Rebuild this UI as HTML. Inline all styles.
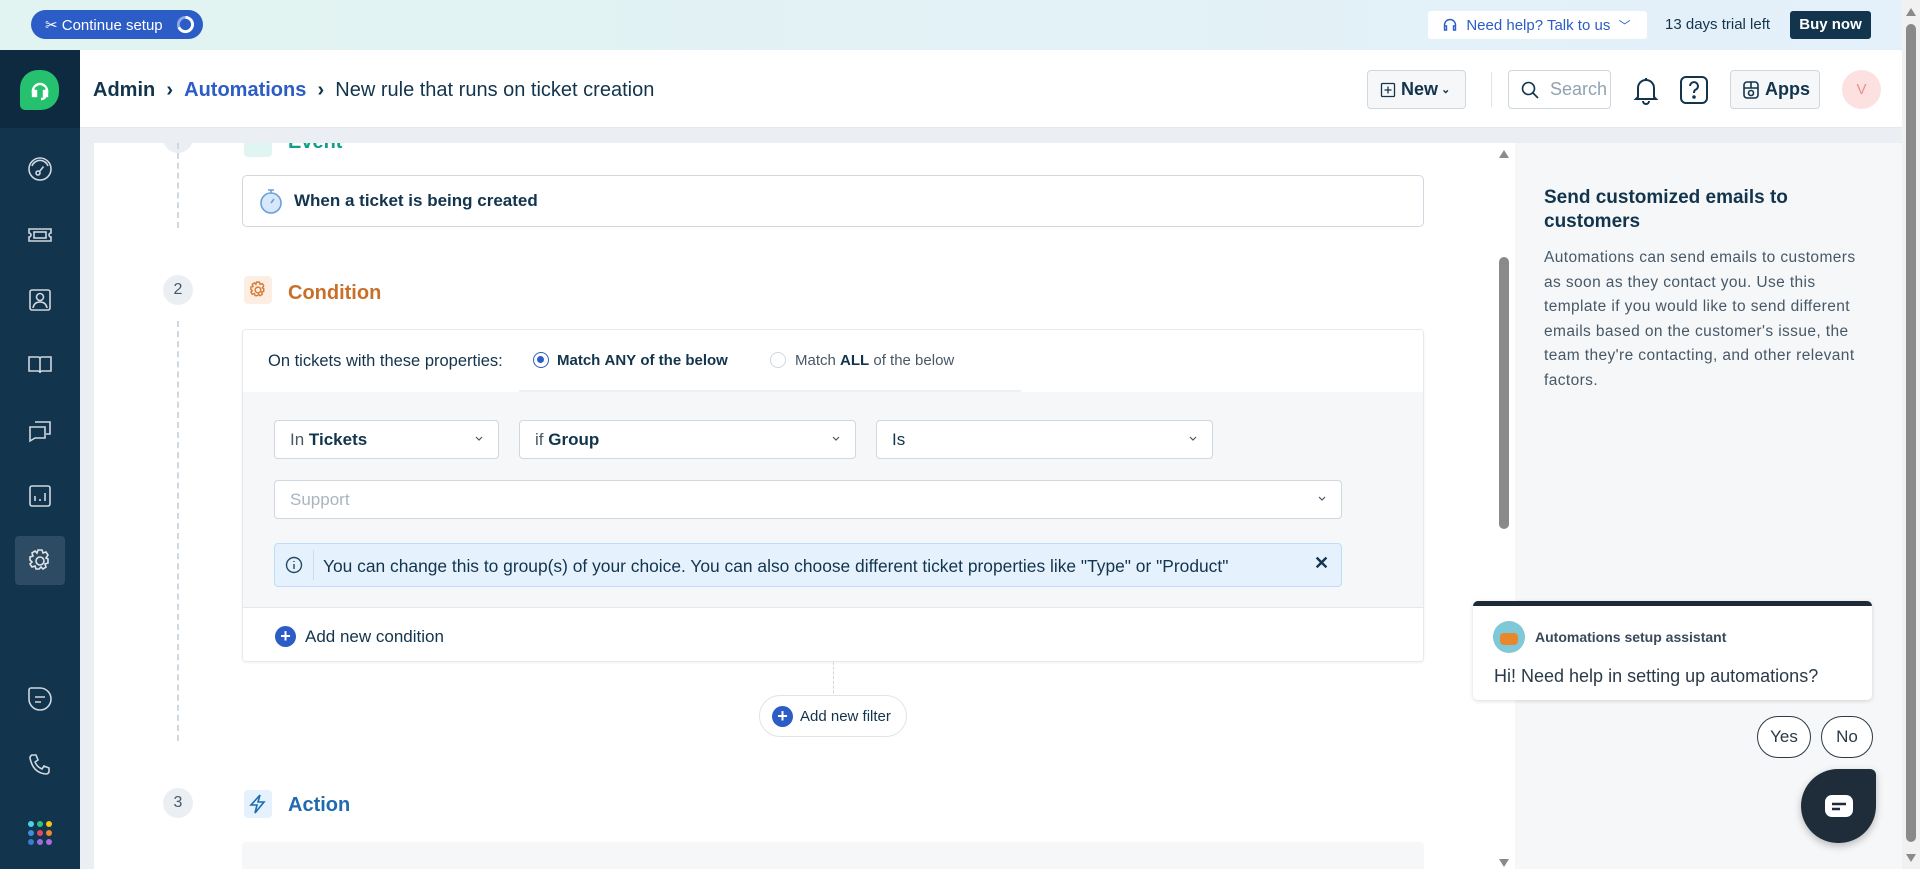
<!DOCTYPE html>
<html><head><meta charset="utf-8"><style>
*{box-sizing:border-box;margin:0;padding:0}
body{width:1920px;height:869px;overflow:hidden;position:relative;font-family:"Liberation Sans",sans-serif;color:#12344d;background:#ebeff3}
.a{position:absolute}
.top{left:0;top:0;width:1902px;height:50px;background:linear-gradient(90deg,#e1f4f1,#e4f0fa)}
.side{left:0;top:50px;width:80px;height:819px;background:#12344d}
.ic{position:absolute;left:26px;width:28px;height:28px}
.hdr{left:80px;top:50px;width:1822px;height:78px;background:#fff;border-bottom:1px solid #e3e8ec}
.btn{position:absolute;border:1px solid #cfd7df;border-radius:4px;background:#f5f7f9;display:flex;align-items:center;font-size:18px;font-weight:600}
.dd{position:absolute;background:#fff;border:1px solid #cfd7df;border-radius:4px;height:39px;font-size:17px;display:flex;align-items:center;padding-left:15px;color:#12344d}
.dd .cv{position:absolute;right:14px;top:12px}
.vd{border-left:2px dashed #cfd7df;position:absolute;width:0}
.num{position:absolute;width:30px;height:30px;border-radius:50%;background:#ebeff3;font-size:16px;text-align:center;line-height:30px;color:#475867}
</style></head><body>
<div class="a top"></div>
<div class="a" style="left:31px;top:10px;width:172px;height:29px;border-radius:15px;background:#2c5cc5;color:#fff;font-size:15px;display:flex;align-items:center;padding-left:14px">✂&nbsp;Continue setup
<svg class="a" style="right:8px;top:5px" width="19" height="19" viewBox="0 0 20 20"><circle cx="10" cy="10" r="7.5" fill="none" stroke="#8fa9e8" stroke-width="3"/><path d="M10 2.5A7.5 7.5 0 1 1 3 13" fill="none" stroke="#fff" stroke-width="3"/></svg></div>
<div class="a" style="left:1428px;top:11px;width:219px;height:28px;background:#fff;border-radius:3px;color:#2c5cc5;font-size:15px;display:flex;align-items:center;padding-left:14px">
<svg width="16" height="16" viewBox="0 0 16 16" fill="none" stroke="#2c5cc5" stroke-width="1.4"><path d="M2.5 10V8a5.5 5.5 0 0 1 11 0v2M2.5 9h2v4h-2zM11.5 9h2v4h-2z"/></svg>&nbsp;&nbsp;Need help? Talk to us&nbsp;&nbsp;<span style="font-size:12px">﹀</span></div>
<div class="a" style="left:1665px;top:16px;font-size:15px;color:#12344d">13 days trial left</div>
<div class="a" style="left:1790px;top:11px;width:81px;height:28px;background:#12344d;border-radius:3px;color:#fff;font-size:15px;font-weight:700;text-align:center;line-height:28px">Buy now</div>

<div class="a side"></div>
<div class="a" style="left:0;top:50px;width:80px;height:78px;background:#0e2a40"></div>
<div class="a" style="left:20px;top:70px;width:39px;height:40px;background:#25c16f;border-radius:18px 18px 18px 5px"></div>
<svg class="a" style="left:29px;top:80px" width="22" height="22" viewBox="0 0 22 22" fill="none" stroke="#fff" stroke-width="2.4"><path d="M4 13V11a7 7 0 0 1 14 0v2"/><rect x="4" y="11" width="3" height="5" fill="#fff"/><rect x="15" y="11" width="3" height="5" fill="#fff"/><path d="M16 16q0 3-4 3"/></svg>
<div class="a" style="left:15px;top:536px;width:50px;height:49px;background:#2d4b63;border-radius:4px"></div>
<svg class="ic" style="top:155px" viewBox="0 0 28 28" fill="none" stroke="#cfd7df" stroke-width="1.6"><circle cx="14" cy="14" r="11"/><path d="M6 11a8.5 8.5 0 0 1 16 0"/><circle cx="12" cy="18" r="2"/><path d="M13.5 16.5l4-5"/></svg>
<svg class="ic" style="top:221px" viewBox="0 0 28 28" fill="none" stroke="#cfd7df" stroke-width="1.6"><path d="M3 8h22v4a2 2 0 0 0 0 4v4H3v-4a2 2 0 0 0 0-4z"/><rect x="8" y="11" width="12" height="6"/></svg>
<svg class="ic" style="top:286px" viewBox="0 0 28 28" fill="none" stroke="#cfd7df" stroke-width="1.6"><rect x="4" y="4" width="20" height="20" rx="2"/><circle cx="14" cy="11" r="3.5"/><path d="M7 22q1-6 7-6t7 6"/></svg>
<svg class="ic" style="top:351px" viewBox="0 0 28 28" fill="none" stroke="#cfd7df" stroke-width="1.6"><path d="M3 6h9q2 0 2 2v14q0-2-2-2H3zM25 6h-9q-2 0-2 2v14q0-2 2-2h9z"/></svg>
<svg class="ic" style="top:416px" viewBox="0 0 28 28" fill="none" stroke="#cfd7df" stroke-width="1.6"><path d="M9 6h15v12h-4M4 11h15v11H9l-5 3z"/></svg>
<svg class="ic" style="top:482px" viewBox="0 0 28 28" fill="none" stroke="#cfd7df" stroke-width="1.6"><rect x="4" y="4" width="20" height="20" rx="2"/><path d="M9 19v-5M14 19v-2M19 19v-8"/></svg>
<svg class="ic" style="top:547px" viewBox="0 0 28 28" fill="none" stroke="#dfe5ea" stroke-width="1.6"><circle cx="14" cy="14" r="4"/><path d="M12 3h4l1 3 3-1 2 3-2 3 2 1v4l-3 1 1 3-3 2-2-2-2 2h-3l-1-3-3 1-2-3 2-2-2-2v-3l3-1-1-3 3-2 2 2z"/></svg>
<svg class="ic" style="top:685px" viewBox="0 0 28 28" fill="none" stroke="#cfd7df" stroke-width="1.6"><path d="M14 3a11 11 0 1 1-11 11V5a2 2 0 0 1 2-2z"/><path d="M9 12h10M9 17h6"/></svg>
<svg class="ic" style="top:751px" viewBox="0 0 28 28" fill="none" stroke="#cfd7df" stroke-width="1.6"><path d="M6 4l4 0 2 5-3 2q2 5 7 7l2-3 5 2v4q-1 2-3 2Q7 22 4 7q0-2 2-3z"/></svg>
<svg class="a" style="left:26px;top:820px" width="28" height="26" viewBox="0 0 28 26"><g><circle cx="5" cy="4" r="3" fill="#4fd1e6"/><circle cx="14" cy="4" r="3" fill="#2ec27e"/><circle cx="23" cy="4" r="3" fill="#f5c518"/><circle cx="5" cy="13" r="3" fill="#3d8fe0"/><circle cx="14" cy="13" r="3" fill="#e5486a"/><circle cx="23" cy="13" r="3" fill="#f08a30"/><circle cx="5" cy="22" r="3" fill="#3a7bd5"/><circle cx="14" cy="22" r="3" fill="#9b6ee0"/><circle cx="23" cy="22" r="3" fill="#b469d9"/></g></svg>

<div class="a hdr"></div>
<div class="a" style="left:93px;top:79px;font-size:20px;color:#12344d;white-space:nowrap"><b style="font-weight:600">Admin</b>&nbsp;&nbsp;<b>›</b>&nbsp;&nbsp;<span style="color:#2c5cc5;font-weight:600">Automations</span>&nbsp;&nbsp;<b>›</b>&nbsp;&nbsp;New rule that runs on ticket creation</div>
<div class="btn" style="left:1367px;top:70px;width:99px;height:39px;padding-left:12px"><svg width="16" height="16" viewBox="0 0 16 16" fill="none" stroke="#12344d" stroke-width="1.3"><rect x="1.5" y="1.5" width="13" height="13" rx="1"/><path d="M8 4.5v7M4.5 8h7"/></svg>&nbsp;New <span style="font-size:11px">&nbsp;⌄</span></div>
<div class="a" style="left:1491px;top:72px;width:1px;height:35px;background:#dfe4e8"></div>
<div class="btn" style="left:1508px;top:70px;width:103px;height:39px;background:#fff;font-weight:400;color:#92a2b1;padding-left:11px"><svg width="20" height="20" viewBox="0 0 20 20" fill="none" stroke="#12344d" stroke-width="1.6"><circle cx="8.5" cy="8.5" r="6"/><path d="M13 13l5 5"/></svg>&nbsp;&nbsp;Search</div>
<svg class="a" style="left:1633px;top:75px" width="26" height="30" viewBox="0 0 26 30" fill="none" stroke="#12344d" stroke-width="2"><path d="M5 22V13a8 8 0 0 1 16 0v9l2 2H3zM10 26a3 3 0 0 0 6 0M13 3v2"/></svg>
<svg class="a" style="left:1679px;top:75px" width="30" height="30" viewBox="0 0 30 30" fill="none" stroke="#12344d" stroke-width="2"><rect x="2" y="2" width="26" height="26" rx="5"/><path d="M11 11a4 4 0 1 1 5 4q-1 1-1 3"/><circle cx="15" cy="22" r="0.8" fill="#12344d"/></svg>
<div class="btn" style="left:1730px;top:70px;width:90px;height:39px;padding-left:11px"><svg width="18" height="20" viewBox="0 0 18 20" fill="none" stroke="#12344d" stroke-width="1.6"><rect x="2" y="2" width="14" height="16" rx="3"/><path d="M2 8h14M9 2v6"/><circle cx="9" cy="13" r="2.5"/></svg>&nbsp;Apps</div>
<div class="a" style="left:1842px;top:70px;width:39px;height:39px;border-radius:50%;background:#fde0e0;color:#e89090;font-size:15px;text-align:center;line-height:39px">V</div>

<div class="a" style="left:94px;top:143px;width:1421px;height:726px;background:#fff;overflow:hidden">
 <div class="num" style="left:69px;top:-20px"></div>
 <div class="a" style="left:150px;top:-14px;width:28px;height:28px;background:#e0f5f1;border-radius:4px"></div>
 <div class="a" style="left:194px;top:-12px;font-size:20px;font-weight:600;color:#12a08a">Event</div>
 <div class="vd" style="left:83px;top:0;height:85px"></div>
 <div class="a" style="left:148px;top:32px;width:1182px;height:52px;border:1px solid #cfd7df;border-radius:5px"></div>
 <svg class="a" style="left:164px;top:44px" width="26" height="28" viewBox="0 0 26 28"><circle cx="13" cy="16" r="10" fill="#d6e8fa" stroke="#6c9ed9" stroke-width="1.6"/><path d="M10 3h6M13 3v3M13 16l3-4" stroke="#6c9ed9" stroke-width="1.6" fill="none"/></svg>
 <div class="a" style="left:200px;top:48px;font-size:17px;font-weight:600">When a ticket is being created</div>

 <div class="num" style="left:69px;top:132px">2</div>
 <div class="a" style="left:150px;top:133px;width:28px;height:28px;background:#fdeee3;border-radius:4px"></div>
 <svg class="a" style="left:154px;top:137px" width="20" height="20" viewBox="0 0 28 28" fill="none" stroke="#d97b33" stroke-width="2"><circle cx="14" cy="14" r="4"/><path d="M12 3h4l1 3 3-1 2 3-2 3 2 1v4l-3 1 1 3-3 2-2-2-2 2h-3l-1-3-3 1-2-3 2-2-2-2v-3l3-1-1-3 3-2 2 2z"/></svg>
 <div class="a" style="left:194px;top:139px;font-size:20px;font-weight:600;color:#c8702a">Condition</div>
 <div class="vd" style="left:83px;top:178px;height:420px"></div>

 <div class="a" style="left:148px;top:186px;width:1182px;height:333px;border:1px solid #e6eaee;border-radius:4px;overflow:hidden;box-shadow:0 1px 2px rgba(0,0,0,.06)">
  <div class="a" style="left:0;top:0;width:100%;height:62px;background:#fff"></div>
  <div class="a" style="left:25px;top:22px;font-size:16.5px;color:#12344d">On tickets with these properties:</div>
  <div class="a" style="left:290px;top:22px;width:16px;height:16px;border-radius:50%;border:1.5px solid #2c5cc5"><div style="margin:3px;width:7px;height:7px;border-radius:50%;background:#2c5cc5"></div></div>
  <div class="a" style="left:314px;top:22px;font-size:15px;font-weight:600">Match <b>ANY</b> of the below</div>
  <div class="a" style="left:527px;top:22px;width:16px;height:16px;border-radius:50%;border:1px solid #cfd7df"></div>
  <div class="a" style="left:552px;top:22px;font-size:15px;color:#475867">Match <b style="color:#12344d">ALL</b> of the below</div>
  <div class="a" style="left:0;top:62px;width:100%;height:216px;background:#f5f7f9;border-bottom:1px solid #e3e8ec"></div>
  <div class="a" style="left:276px;top:60px;width:502px;height:2px;background:#eef1f4"></div>
  <div class="dd" style="left:31px;top:90px;width:225px"><span style="color:#475867">In&nbsp;</span><b style="font-weight:600">Tickets</b><svg class="cv" width="10" height="10" viewBox="0 0 10 10"><path d="M2 4l3 3 3-3" fill="none" stroke="#475867" stroke-width="1.2"/></svg></div>
  <div class="dd" style="left:276px;top:90px;width:337px"><span style="color:#475867">if&nbsp;</span><b style="font-weight:600">Group</b><svg class="cv" width="10" height="10" viewBox="0 0 10 10"><path d="M2 4l3 3 3-3" fill="none" stroke="#475867" stroke-width="1.2"/></svg></div>
  <div class="dd" style="left:633px;top:90px;width:337px">Is<svg class="cv" width="10" height="10" viewBox="0 0 10 10"><path d="M2 4l3 3 3-3" fill="none" stroke="#475867" stroke-width="1.2"/></svg></div>
  <div class="dd" style="left:31px;top:150px;width:1068px;color:#a8b5c0">Support<svg class="cv" width="10" height="10" viewBox="0 0 10 10"><path d="M2 4l3 3 3-3" fill="none" stroke="#475867" stroke-width="1.2"/></svg></div>
  <div class="a" style="left:31px;top:213px;width:1068px;height:44px;background:#e5f2fd;border:1px solid #bbdcfe;border-radius:4px">
   <svg class="a" style="left:10px;top:12px" width="18" height="18" viewBox="0 0 18 18" fill="none" stroke="#264966" stroke-width="1.4"><circle cx="9" cy="9" r="7.5"/><path d="M9 8v5M9 5v1"/></svg>
   <div class="a" style="left:38px;top:6px;width:1px;height:30px;background:#c7dcef"></div>
   <div class="a" style="left:48px;top:12px;font-size:17.4px;color:#12344d;white-space:nowrap">You can change this to group(s) of your choice. You can also choose different ticket properties like "Type" or "Product"</div>
   <div class="a" style="left:1039px;top:9px;font-size:18px;font-weight:700">✕</div>
  </div>
  <div class="a" style="left:32px;top:296px;width:21px;height:21px;border-radius:50%;background:#2c5cc5;color:#fff;font-size:18px;line-height:20px;text-align:center;font-weight:700">+</div>
  <div class="a" style="left:62px;top:297px;font-size:17px">Add new condition</div>
 </div>
 <div class="vd" style="left:739px;top:519px;height:36px;border-left-width:1px"></div>
 <div class="a" style="left:665px;top:552px;width:148px;height:42px;border:1px solid #dfe4e8;border-radius:21px;background:#fff"></div>
 <div class="a" style="left:678px;top:563px;width:21px;height:21px;border-radius:50%;background:#2c5cc5;color:#fff;font-size:18px;line-height:20px;text-align:center;font-weight:700">+</div>
 <div class="a" style="left:706px;top:565px;font-size:15px">Add new filter</div>

 <div class="num" style="left:69px;top:645px">3</div>
 <div class="a" style="left:150px;top:647px;width:28px;height:28px;background:#e5f2fd;border-radius:4px"></div>
 <svg class="a" style="left:154px;top:650px" width="20" height="22" viewBox="0 0 20 22" fill="none" stroke="#1f6ab0" stroke-width="1.6"><path d="M12 2L3 12h6l-2 8 9-11h-6l2-7z"/></svg>
 <div class="a" style="left:194px;top:651px;font-size:20px;font-weight:600;color:#1f6ab0">Action</div>
 <div class="a" style="left:148px;top:699px;width:1182px;height:40px;background:#f5f7f9;border-radius:4px"></div>

 <div class="a" style="left:1403px;top:0;width:15px;height:726px;background:#fff"></div>
 <div class="a" style="left:1405px;top:7px;width:0;height:0;border-left:5px solid transparent;border-right:5px solid transparent;border-bottom:8px solid #8a8a8a"></div>
 <div class="a" style="left:1405px;top:114px;width:10px;height:272px;background:#8a8a8a;border-radius:5px"></div>
 <div class="a" style="left:1405px;top:716px;width:0;height:0;border-left:5px solid transparent;border-right:5px solid transparent;border-top:8px solid #8a8a8a"></div>
</div>

<div class="a" style="left:1515px;top:143px;width:387px;height:726px;background:#f5f7f9"></div>
<div class="a" style="left:1544px;top:186px;width:320px;font-size:19px;font-weight:600;line-height:24px;color:#12344d">Send customized emails to customers</div>
<div class="a" style="left:1544px;top:246px;white-space:nowrap;font-size:15.5px;letter-spacing:0.4px;line-height:24.5px;color:#475867">Automations can send emails to customers<br>as soon as they contact you. Use this<br>template if you would like to send different<br>emails based on the customer's issue, the<br>team they're contacting, and other relevant<br>factors.</div>

<div class="a" style="left:1473px;top:601px;width:399px;height:99px;background:#fff;border-top:5px solid #1e2a36;border-radius:5px;box-shadow:0 1px 4px rgba(0,0,0,.15)"></div>
<div class="a" style="left:1493px;top:621px;width:32px;height:32px;border-radius:50%;background:#7ec8d8;overflow:hidden"><div style="margin:12px 0 0 7px;width:18px;height:12px;background:#e8872c;border-radius:4px"></div></div>
<div class="a" style="left:1535px;top:629px;font-size:14px;font-weight:700;color:#3a4a5a">Automations setup assistant</div>
<div class="a" style="left:1494px;top:666px;font-size:18px;color:#2b3a48">Hi! Need help in setting up automations?</div>
<div class="a" style="left:1757px;top:716px;width:54px;height:42px;border:1px solid #2b3a48;border-radius:21px;background:#fff;font-size:17px;text-align:center;line-height:40px;color:#2b3a48">Yes</div>
<div class="a" style="left:1821px;top:716px;width:52px;height:42px;border:1px solid #2b3a48;border-radius:21px;background:#fff;font-size:17px;text-align:center;line-height:40px;color:#2b3a48">No</div>
<div class="a" style="left:1801px;top:769px;width:75px;height:74px;background:#1f2d3a;border-radius:37px 6px 37px 37px;box-shadow:0 3px 8px rgba(0,0,0,.25)"></div>
<svg class="a" style="left:1824px;top:793px" width="30" height="26" viewBox="0 0 30 26"><rect x="1" y="2" width="28" height="22" rx="7" fill="#fff"/><path d="M8 11h14M8 16h8" stroke="#1f2d3a" stroke-width="2.4"/></svg>

<div class="a" style="left:1902px;top:0;width:18px;height:869px;background:#f1f1f1"></div>
<div class="a" style="left:1906px;top:8px;width:0;height:0;border-left:5px solid transparent;border-right:5px solid transparent;border-bottom:8px solid #8a8a8a"></div>
<div class="a" style="left:1906px;top:24px;width:10px;height:818px;background:#8a8a8a;border-radius:5px"></div>
<div class="a" style="left:1906px;top:854px;width:0;height:0;border-left:5px solid transparent;border-right:5px solid transparent;border-top:8px solid #8a8a8a"></div>
</body></html>
